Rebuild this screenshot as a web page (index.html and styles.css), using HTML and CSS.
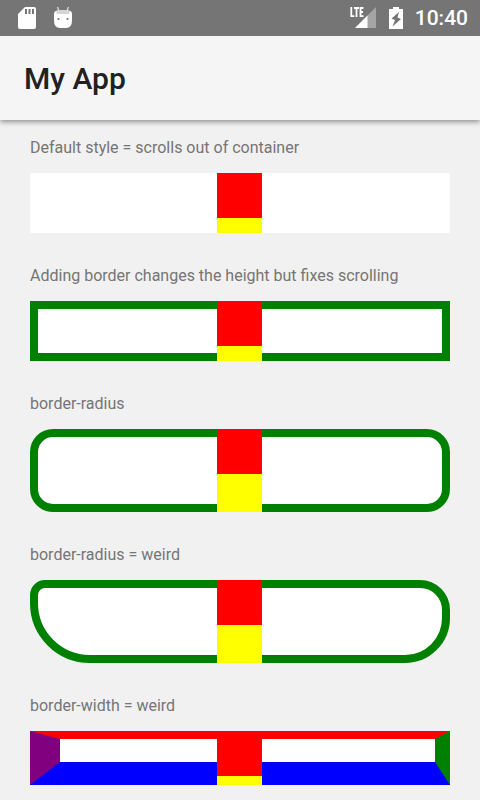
FILE: index.html
```html
<!DOCTYPE html>
<html lang="en">
<head>
<meta charset="utf-8">
<meta name="viewport" content="width=device-width, initial-scale=1">
<title>My App</title>
<link rel="stylesheet" href="styles.css">
</head>
<body>
<div class="status-bar">
  <svg class="icon" width="18" height="22" viewBox="0 0 18 22" aria-hidden="true">
    <path fill="#fff" d="M7 0h9a2 2 0 0 1 2 2v18a2 2 0 0 1-2 2H2a2 2 0 0 1-2-2V7z"/>
    <path fill="#757575" d="M7 2h2v5H7zM10.500 2h2v5h-2zM14 2h2v5h-2z"/>
  </svg>
  <svg class="icon robot" width="18" height="22" viewBox="0 0 18 22" aria-hidden="true">
    <path stroke="#e4e4e4" stroke-width="1.200" fill="none" d="M3.500 0l1.500 4M14.500 0L13 4"/>
    <path fill="#fff" d="M0 7Q0 3.500 4 3.500h10q4 0 4 3.500v6q0 8-6 8H6q-6 0-6-8z"/>
    <path fill="#d6d6d6" d="M2.500 4Q4 3 6 3h6q2 0 3.500 1v3h-13z"/>
    <circle cx="4.500" cy="12" r="1.100" fill="#757575"/>
    <circle cx="13.500" cy="12" r="1.100" fill="#757575"/>
  </svg>
  <span class="spacer"></span>
  <svg class="icon" width="27" height="22" viewBox="0 0 27 22" aria-hidden="true">
    <path stroke="#fff" stroke-width="1.800" fill="none" d="M1.300 0v9.200H4.300M4 1h5M6.500 1V10M13.500 1h-3v8.200h3M10.300 5h2.700"/>
    <path fill="#a5a5a5" d="M26 0v21H5z"/>
    <path fill="#fff" d="M17.500 8.500V21H5z"/>
  </svg>
  <svg class="icon battery" width="14" height="22" viewBox="0 0 14 22" aria-hidden="true">
    <path fill="#fff" d="M4 0h6v2h4v20H0V2h4z"/>
    <path fill="#757575" d="M10 5L2.500 11.500l3.500 1.500L3.500 19.500 12 12 8.500 10.500z"/>
  </svg>
  <time class="clock">10:40</time>
</div>
<header class="app-bar"><h1 class="title">My App</h1></header>
<main class="content">
  <section class="example">
    <h2 class="label">Default style = scrolls out of container</h2>
    <div class="demo"><div class="frame"></div><div class="stack"><div class="red"></div><div class="yellow"></div></div></div>
  </section>
  <section class="example">
    <h2 class="label">Adding border changes the height but fixes scrolling</h2>
    <div class="demo"><div class="frame bordered"></div><div class="stack"><div class="red"></div><div class="yellow"></div></div></div>
  </section>
  <section class="example">
    <h2 class="label">border-radius</h2>
    <div class="demo tall"><div class="frame bordered rounded"></div><div class="stack"><div class="red"></div><div class="yellow"></div></div></div>
  </section>
  <section class="example">
    <h2 class="label">border-radius = weird</h2>
    <div class="demo tall"><div class="frame bordered uneven-radius"></div><div class="stack"><div class="red"></div><div class="yellow"></div></div></div>
  </section>
  <section class="example">
    <h2 class="label">border-width = weird</h2>
    <div class="demo short"><div class="frame uneven-width"></div><div class="stack"><div class="red"></div><div class="yellow"></div></div></div>
  </section>
</main>
</body>
</html>
```

FILE: styles.css
```css
* {
  box-sizing: border-box;
}

body {
  margin: 0;
  background: #f1f1f1;
  font-family: Roboto, "Liberation Sans", sans-serif;
}

.status-bar {
  position: relative;
  z-index: 1;
  display: flex;
  align-items: center;
  height: 36px;
  padding: 0 12px 0 18px;
  background: #757575;
  color: #fff;
}

.icon {
  display: block;
  flex: none;
}

.robot {
  margin-left: 18px;
}

.battery {
  margin: 0 12px;
}

.spacer {
  flex: 1;
}

.clock {
  font-size: 21px;
  font-weight: 500;
  line-height: 36px;
}

.app-bar {
  position: relative;
  display: flex;
  align-items: center;
  height: 84px;
  padding: 0 24px;
  background: #f5f5f5;
  box-shadow: 0 2px 5px rgba(0, 0, 0, 0.4);
}

.title {
  margin: 0;
  color: #212121;
  font-size: 30px;
  font-weight: 500;
}

.content {
  padding: 16px 30px 15px;
}

.example {
  margin-bottom: 31px;
}

.example:last-child {
  margin-bottom: 0;
}

.label {
  margin: 0 0 13px;
  color: #757575;
  font-size: 16px;
  font-weight: 400;
  line-height: 24px;
}

.demo {
  display: grid;
  grid-template: 60px / 1fr;
}

.tall {
  grid-template-rows: 83px;
}

.short {
  grid-template-rows: 54px;
}

.frame,
.stack {
  grid-area: 1 / 1;
}

.frame {
  background: #fff;
}

.bordered {
  border: 8px solid #008000;
}

.rounded {
  border-radius: 23px;
}

.uneven-radius {
  border-radius: 15px 30px 45px 60px;
}

.uneven-width {
  border-style: solid;
  border-width: 8px 15px 23px 30px;
  border-color: #f00 #008000 #00f #800080;
}

.stack {
  justify-self: center;
  overflow: hidden;
  width: 45px;
  margin-right: 1px;
}

.red,
.yellow {
  height: 45px;
}

.red {
  background: #f00;
}

.yellow {
  background: #ff0;
}
```
